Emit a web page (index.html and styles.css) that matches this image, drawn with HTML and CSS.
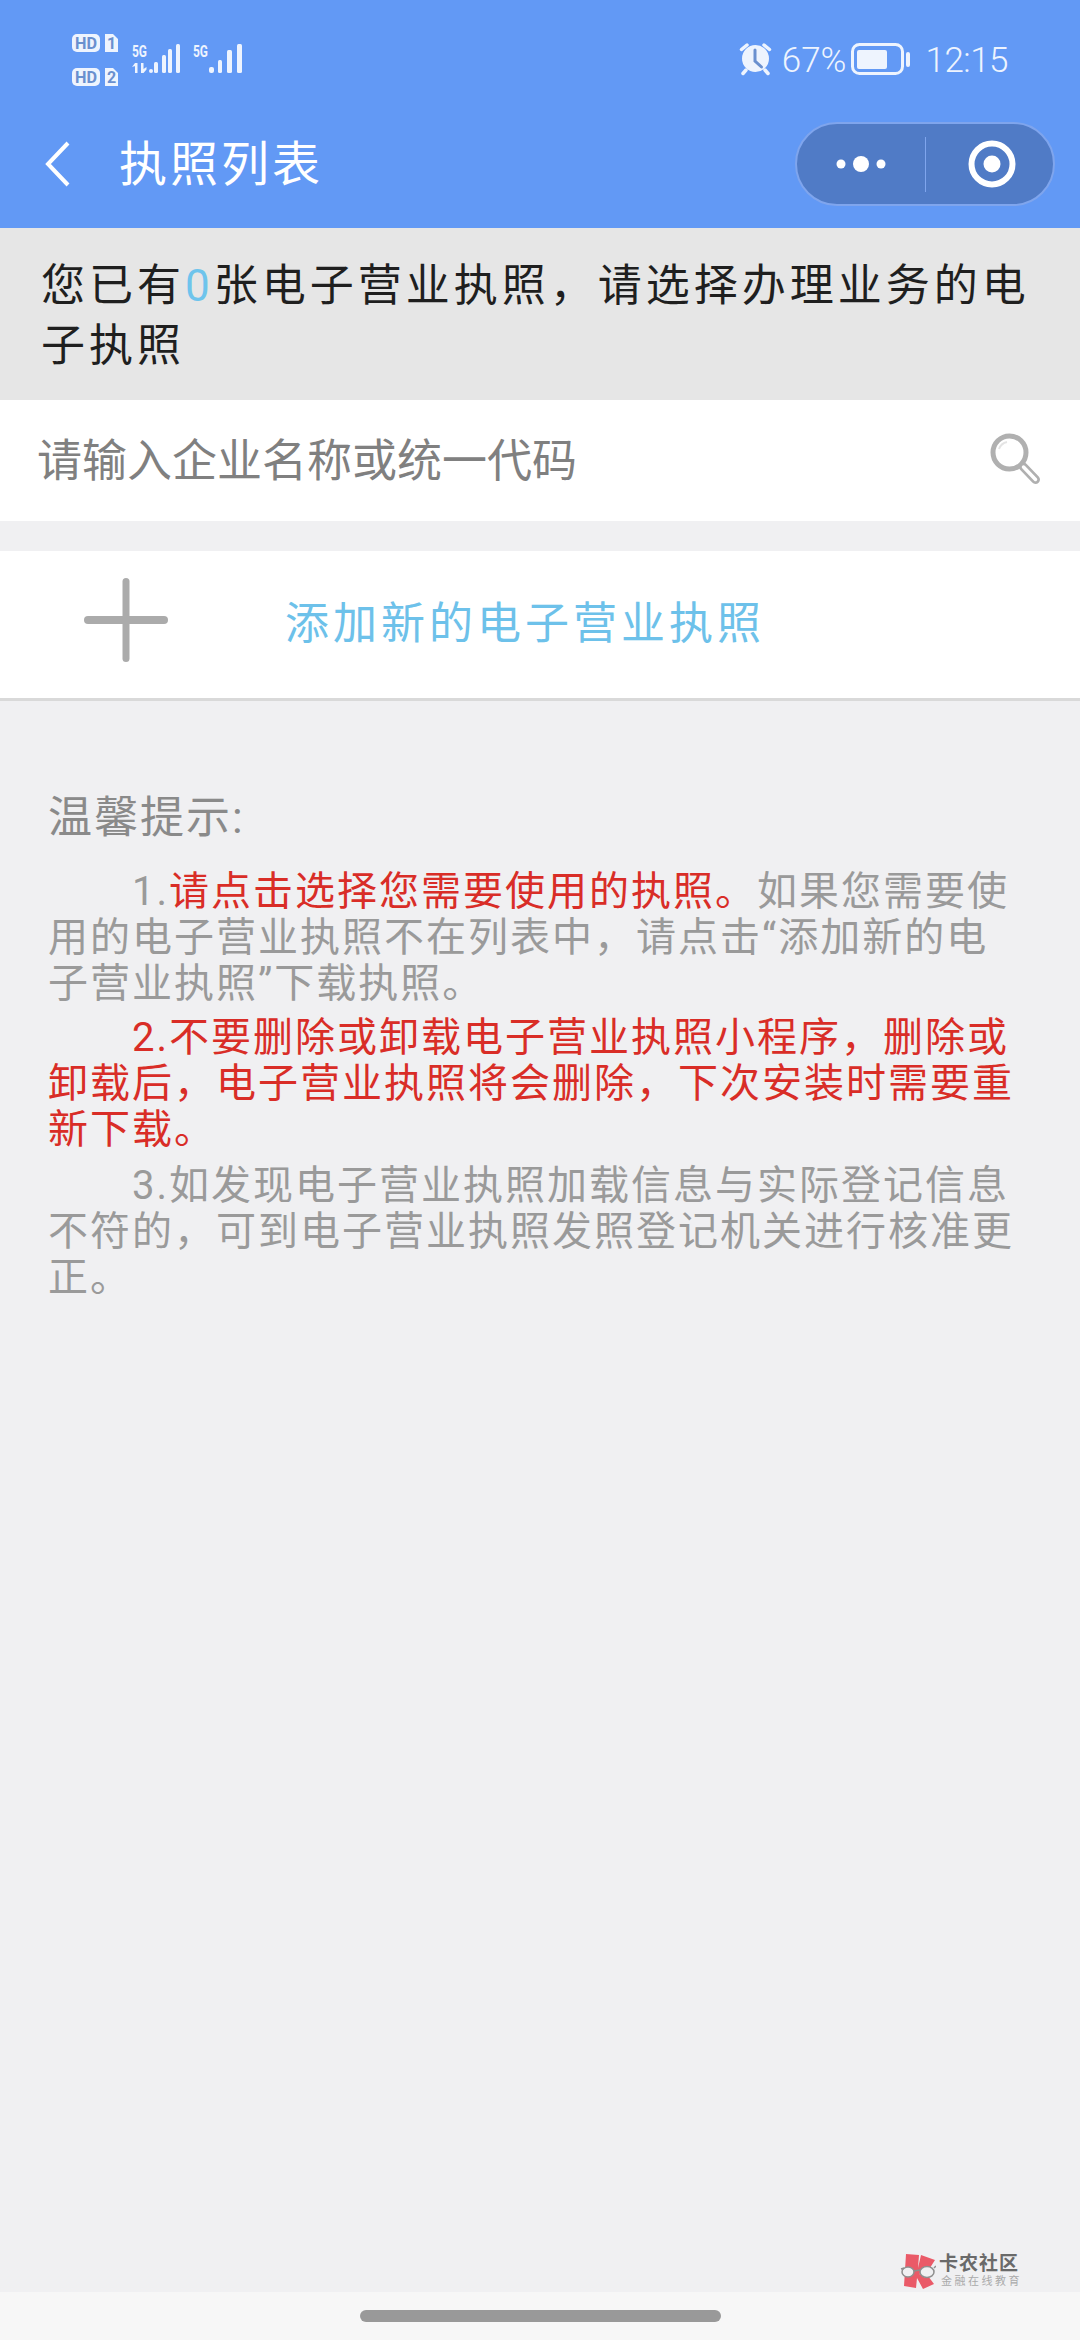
FILE: index.html
```html
<!DOCTYPE html>
<html lang="zh-CN">
<head>
<meta charset="utf-8">
<title>执照列表</title>
<link rel="stylesheet" href="styles.css">
</head>
<body>
<div class="page">
  <header class="header">
    <div class="status">
      <svg class="status-left" width="46" height="52" viewBox="0 0 46 52">
        <rect class="fill" x="0" y="0" width="28" height="18" rx="5"/>
        <text class="chip" x="14" y="15" textLength="22" lengthAdjust="spacingAndGlyphs">HD</text>
        <path class="fill" d="M33 0h8l5 5v13H33z"/>
        <text class="chip" x="39.500" y="15">1</text>
        <rect class="fill" x="0" y="34" width="28" height="18" rx="5"/>
        <text class="chip" x="14" y="49" textLength="22" lengthAdjust="spacingAndGlyphs">HD</text>
        <path class="fill" d="M33 34h8l5 5v13H33z"/>
        <text class="chip" x="39.500" y="49">2</text>
      </svg>
      <svg class="signal" width="50" height="30" viewBox="0 0 50 30">
        <text class="five-g" x="0" y="13" textLength="15" lengthAdjust="spacingAndGlyphs">5G</text>
        <path class="fill" d="M3 19h2.500v10H3zM0 23l3-4v3zM9 19h2.500v6l3-2v2.500l-3 3.500H9z"/>
        <rect class="fill" x="17" y="25" width="4" height="4" rx="2"/>
        <rect class="fill" x="22" y="18" width="4" height="11" rx="1.500"/>
        <rect class="fill" x="30" y="11" width="4" height="18" rx="1.500"/>
        <rect class="fill" x="36" y="5" width="4" height="24" rx="1.500"/>
        <rect class="fill" x="44" y="0" width="4" height="29" rx="1.500"/>
      </svg>
      <svg class="signal second" width="50" height="30" viewBox="0 0 50 30">
        <text class="five-g" x="0" y="13" textLength="15" lengthAdjust="spacingAndGlyphs">5G</text>
        <rect class="fill" x="16" y="23" width="5" height="6" rx="2"/>
        <rect class="fill" x="25" y="16" width="4" height="13" rx="1.500"/>
        <rect class="fill" x="34" y="6" width="5" height="23" rx="1.500"/>
        <rect class="fill" x="44" y="0" width="5" height="29" rx="1.500"/>
      </svg>
      <div class="status-spacer"></div>
      <svg class="alarm" width="34" height="32" viewBox="0 0 34 32">
        <circle class="fill" cx="16.500" cy="15.500" r="13.500"/>
        <path class="clock-hand" d="M16 7v11l6.500 6"/>
        <path class="alarm-ear" d="M2.500 6.500L8 2M30.500 6.500L25 2M7 27l-3 3.500M26 27l3 3.500"/>
      </svg>
      <span class="percent">67%</span>
      <svg class="battery" width="60" height="32" viewBox="0 0 60 32">
        <rect class="battery-shell" x="1.500" y="1.500" width="50" height="29" rx="7"/>
        <rect class="fill" x="6" y="7" width="30" height="19" rx="2"/>
        <rect class="fill" x="55" y="9" width="4" height="15" rx="2"/>
      </svg>
      <span class="clock">12:15</span>
    </div>
    <div class="nav">
      <svg class="back" width="26" height="48" viewBox="0 0 26 48">
        <path d="M23 3L3 24l20 21"/>
      </svg>
      <h1 class="title">执照列表</h1>
      <div class="capsule">
        <div class="capsule-part">
          <svg width="50" height="20" viewBox="0 0 50 20">
            <circle class="white" cx="5" cy="10" r="4.500"/>
            <circle class="white" cx="25" cy="10" r="8"/>
            <circle class="white" cx="45" cy="10" r="4.500"/>
          </svg>
        </div>
        <div class="capsule-line"></div>
        <div class="capsule-part">
          <svg class="target" width="50" height="50" viewBox="0 0 50 50">
            <circle class="ring" cx="25" cy="25" r="20.500"/>
            <circle class="white" cx="25" cy="25" r="8.500"/>
          </svg>
        </div>
      </div>
    </div>
  </header>

  <main class="main">
    <div class="banner">您已有<span class="count">0</span>张电子营业执照，请选择办理业务的电子执照</div>
    <div class="search">
      <span class="search-text">请输入企业名称或统一代码</span>
      <svg class="search-icon" width="52" height="52" viewBox="0 0 52 52">
        <circle class="lens" cx="19.500" cy="19.500" r="16.500"/>
        <path class="glint" d="M9 16a11 11 0 0 1 8-7"/>
        <path class="handle-out" d="M33.500 34L45.500 46.500"/>
        <path class="handle-in" d="M33.500 34L45.500 46.500"/>
      </svg>
    </div>
    <div class="add">
      <svg class="plus" width="84" height="84" viewBox="0 0 84 84">
        <rect x="38.500" y="0" width="7" height="84" rx="3.500"/>
        <rect x="0" y="38" width="84" height="8" rx="4"/>
      </svg>
      <span class="add-text">添加新的电子营业执照</span>
    </div>
    <section class="notes">
      <h2 class="notes-title">温馨提示:</h2>
      <p class="note lead"><span>1.</span><span class="red">请点击选择您需要使用的执照。</span>如果您需要使用的电子营业执照不在列表中，请点击“添加新的电子营业执照”下载执照。</p>
      <p class="note red">2.不要删除或卸载电子营业执照小程序，删除或卸载后，电子营业执照将会删除，下次安装时需要重新下载。</p>
      <p class="note">3.如发现电子营业执照加载信息与实际登记信息不符的，可到电子营业执照发照登记机关进行核准更正。</p>
    </section>
  </main>

  <footer class="home">
    <div class="home-bar"></div>
  </footer>

  <div class="watermark">
    <svg width="36" height="36" viewBox="0 0 36 36">
      <path class="wm-red" d="M6 1l13 1-1 13 3-13 14 5-7 11-9 3 9 2 6 8-11 5-6-11-1 10-12-2z"/>
      <ellipse class="wm-lens" cx="8" cy="19" rx="6" ry="5"/>
      <ellipse class="wm-lens" cx="27" cy="19" rx="7" ry="5.500"/>
      <path class="wm-frame" d="M1 16l3-1M14 18l6-1M34 15l2-2"/>
    </svg>
    <div class="wm-text">
      <span class="wm-name">卡农社区</span>
      <span class="wm-sub">金融在线教育</span>
    </div>
  </div>
</div>
</body>
</html>
```
FILE: styles.css
```css
* { box-sizing: border-box; }
html, body { margin: 0; padding: 0; }
body {
  width: 1080px;
  height: 2340px;
  overflow: hidden;
  font-family: Roboto, "Noto Sans CJK SC", sans-serif;
  background: #f0f0f2;
}
.page {
  position: relative;
  width: 1080px;
  height: 2340px;
  display: flex;
  flex-direction: column;
}
.header {
  height: 228px;
  background: #6299f5;
  flex: none;
}
.header svg { overflow: visible; }
.status {
  height: 126px;
  display: flex;
  align-items: flex-start;
  padding: 34px 0 0 72px;
  color: #eef4fe;
}
.status-left { flex: none; margin-right: 14px; }
.signal { flex: none; margin-top: 10px; }
.signal.second { margin-left: 11px; }
.status-spacer { flex: 1; }
.fill { fill: #eef4fe; }
.white { fill: #fff; }
.chip {
  font: 700 16px Roboto, sans-serif;
  fill: #6a90cf;
  text-anchor: middle;
}
.five-g {
  font: 700 16px Roboto, sans-serif;
  fill: #eef4fe;
}
.alarm { flex: none; margin: 9px 9px 0 0; }
.clock-hand { fill: none; stroke: #6a90cf; stroke-width: 3; stroke-linecap: round; }
.alarm-ear { fill: none; stroke: #eef4fe; stroke-width: 3.500; stroke-linecap: round; }
.percent, .clock {
  font-size: 35px;
  font-weight: 300;
  line-height: 42px;
  margin-top: 6px;
}
.percent { margin-right: 5px; }
.battery { flex: none; margin: 9px 14px 0 0; }
.battery-shell { fill: none; stroke: #eef4fe; stroke-width: 3; }
.clock { margin-right: 72px; letter-spacing: -0.5px; }
.nav {
  height: 102px;
  display: flex;
  align-items: center;
  padding-left: 45px;
  padding-bottom: 26px;
}
.back { flex: none; }
.back path { fill: none; stroke: #fff; stroke-width: 4; }
.title {
  flex: 1;
  margin: 2px 0 0 48px;
  font-size: 48px;
  line-height: 60px;
  font-weight: 400;
  letter-spacing: 3px;
  color: #fff;
}
.capsule {
  flex: none;
  width: 260px;
  height: 84px;
  margin-right: 25px;
  display: flex;
  align-items: center;
  border: 2px solid #7fa5ed;
  border-radius: 42px;
  background: #507bc6;
}
.capsule-part {
  flex: 1;
  display: flex;
  justify-content: center;
  align-items: center;
}
.capsule-line { width: 1px; height: 55px; background: #7fa5ed; }
.target { margin-left: 5px; }
.ring { fill: none; stroke: #fff; stroke-width: 6; }
.main {
  flex: 1;
  display: flex;
  flex-direction: column;
}
.banner {
  height: 172px;
  padding: 28px 30px 0 41px;
  background: #e6e6e6;
  font-size: 44px;
  line-height: 60px;
  letter-spacing: 4px;
  color: #1f1f1f;
}
.count { color: #6ec4ec; font-weight: 400; }
.search {
  height: 121px;
  display: flex;
  align-items: center;
  justify-content: space-between;
  padding: 0 38px 0 37px;
  background: #fff;
}
.search-text { margin-top: 3px; font-size: 45px; line-height: 60px; color: #808080; }
.search-icon { flex: none; margin-top: -3px; }
.lens { fill: none; stroke: #b0b0b0; stroke-width: 5; }
.glint { fill: none; stroke: #e4e4e4; stroke-width: 2; }
.handle-out { fill: none; stroke: #b0b0b0; stroke-width: 9; stroke-linecap: round; }
.handle-in { fill: none; stroke: #fff; stroke-width: 3.500; stroke-linecap: round; }
.add {
  height: 150px;
  margin-top: 30px;
  display: flex;
  align-items: center;
  padding: 0 0 9px 84px;
  background: #fff;
  border-bottom: 3px solid #d9d9d9;
}
.plus { flex: none; }
.plus rect { fill: #ababab; }
.add-text {
  margin: 7px 0 0 117px;
  font-size: 44px;
  line-height: 60px;
  letter-spacing: 4px;
  color: #6dc1ea;
}
.notes { padding: 89px 56px 0 48px; }
.notes-title {
  margin: 0 0 23px;
  font-size: 44px;
  line-height: 56px;
  font-weight: 400;
  letter-spacing: 2px;
  color: #8a8a8a;
}
.note {
  margin: 0 0 10px;
  text-indent: 84px;
  font-size: 40px;
  line-height: 46px;
  letter-spacing: 2px;
  color: #9a9a9a;
}
.lead { margin-bottom: 8px; }
.red { color: #d92d27; }
.home {
  flex: none;
  height: 48px;
  display: flex;
  justify-content: center;
  padding-top: 18px;
  background: #f7f7f7;
}
.home-bar {
  width: 361px;
  height: 12px;
  border-radius: 6px;
  background: #999;
}
.watermark {
  position: absolute;
  left: 900px;
  top: 2253px;
  display: flex;
  gap: 3px;
}
.wm-red { fill: #ea5a68; }
.wm-lens { fill: #f0f0f2; stroke: #8f8f8f; stroke-width: 1.500; }
.wm-frame { fill: none; stroke: #8f8f8f; stroke-width: 1.500; }
.wm-text { display: flex; flex-direction: column; }
.wm-name {
  font-size: 19px;
  line-height: 22px;
  font-weight: 700;
  letter-spacing: 1px;
  color: #6a6a6a;
}
.wm-sub {
  font-size: 11px;
  line-height: 13px;
  letter-spacing: 2.500px;
  color: #aaa;
  margin-left: 2px;
}
```
